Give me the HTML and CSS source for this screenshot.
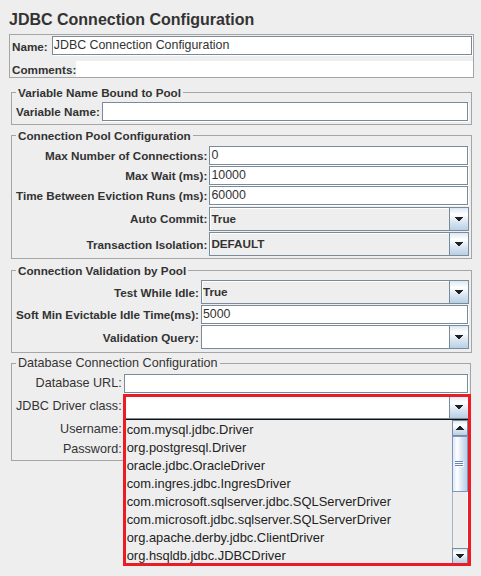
FILE: index.html
```html
<!DOCTYPE html>
<html>
<head>
<meta charset="utf-8">
<title>JDBC Connection Configuration</title>
<link rel="stylesheet" href="styles.css">
</head>
<body>
<div class="page">
  <h1 class="title">JDBC Connection Configuration</h1>

  <div class="name-panel">
    <div class="name-row">
      <span class="lbl">Name:</span>
      <div class="tf">JDBC Connection Configuration</div>
    </div>
    <div class="comments-row">
      <span class="lbl">Comments:</span>
      <div class="comments"></div>
    </div>
  </div>

  <fieldset class="group g1">
    <legend>Variable Name Bound to Pool</legend>
    <div class="form">
      <span class="lbl">Variable Name:</span>
      <div class="tf"></div>
    </div>
  </fieldset>

  <fieldset class="group g2">
    <legend>Connection Pool Configuration</legend>
    <div class="form">
      <span class="lbl">Max Number of Connections:</span>
      <div class="tf">0</div>
      <span class="lbl">Max Wait (ms):</span>
      <div class="tf">10000</div>
      <span class="lbl">Time Between Eviction Runs (ms):</span>
      <div class="tf">60000</div>
      <span class="lbl">Auto Commit:</span>
      <div class="combo mt1">
        <span class="cv">True</span>
        <span class="cbtn"><svg width="8" height="4" viewBox="0 0 8 4"><path d="M0 0h8v1H0zM1 1h6v1H1zM2 2h4v1H2zM3 3h2v1H3z" fill="#222"/></svg></span>
      </div>
      <span class="lbl">Transaction Isolation:</span>
      <div class="combo">
        <span class="cv">DEFAULT</span>
        <span class="cbtn"><svg width="8" height="4" viewBox="0 0 8 4"><path d="M0 0h8v1H0zM1 1h6v1H1zM2 2h4v1H2zM3 3h2v1H3z" fill="#222"/></svg></span>
      </div>
    </div>
  </fieldset>

  <fieldset class="group g3">
    <legend>Connection Validation by Pool</legend>
    <div class="form">
      <span class="lbl">Test While Idle:</span>
      <div class="combo">
        <span class="cv">True</span>
        <span class="cbtn"><svg width="8" height="4" viewBox="0 0 8 4"><path d="M0 0h8v1H0zM1 1h6v1H1zM2 2h4v1H2zM3 3h2v1H3z" fill="#222"/></svg></span>
      </div>
      <span class="lbl">Soft Min Evictable Idle Time(ms):</span>
      <div class="tf">5000</div>
      <span class="lbl">Validation Query:</span>
      <div class="combo edit">
        <span class="cv"></span>
        <span class="cbtn"><svg width="8" height="4" viewBox="0 0 8 4"><path d="M0 0h8v1H0zM1 1h6v1H1zM2 2h4v1H2zM3 3h2v1H3z" fill="#222"/></svg></span>
      </div>
    </div>
  </fieldset>

  <fieldset class="group g4">
    <legend>Database Connection Configuration</legend>
    <div class="form">
      <span class="lbl">Database URL:</span>
      <div class="tf"></div>
      <span class="lbl">JDBC Driver class:</span>
      <div class="combo edit mt1 jdbc">
        <span class="cv"></span>
        <span class="cbtn"><svg width="8" height="4" viewBox="0 0 8 4"><path d="M0 0h8v1H0zM1 1h6v1H1zM2 2h4v1H2zM3 3h2v1H3z" fill="#222"/></svg></span>
        <div class="popup">
          <ul class="items">
            <li>com.mysql.jdbc.Driver</li>
            <li>org.postgresql.Driver</li>
            <li>oracle.jdbc.OracleDriver</li>
            <li>com.ingres.jdbc.IngresDriver</li>
            <li>com.microsoft.sqlserver.jdbc.SQLServerDriver</li>
            <li>com.microsoft.jdbc.sqlserver.SQLServerDriver</li>
            <li>org.apache.derby.jdbc.ClientDriver</li>
            <li>org.hsqldb.jdbc.JDBCDriver</li>
          </ul>
          <div class="sbar">
            <div class="sb-btn"><svg width="8" height="4" viewBox="0 0 8 4"><path d="M3 0h2v1H3zM2 1h4v1H2zM1 2h6v1H1zM0 3h8v1H0z" fill="#222"/></svg></div>
            <div class="sb-thumb"><svg width="9" height="6" viewBox="0 0 9 6"><path d="M0 0h8v1H0zM0 2h8v1H0zM0 4h8v1H0z" fill="#6382bf"/><path d="M1 1h8v1H1zM1 3h8v1H1zM1 5h8v1H1z" fill="#ffffff"/></svg></div>
            <div class="sb-track"></div>
            <div class="sb-btn"><svg width="8" height="4" viewBox="0 0 8 4"><path d="M0 0h8v1H0zM1 1h6v1H1zM2 2h4v1H2zM3 3h2v1H3z" fill="#222"/></svg></div>
          </div>
        </div>
        <div class="redframe"></div>
      </div>
      <span class="lbl">Username:</span>
      <div class="tf"></div>
      <span class="lbl">Password:</span>
      <div class="tf"></div>
    </div>
  </fieldset>
</div>
</body>
</html>
```

FILE: styles.css
```css
* { box-sizing: border-box; }
html, body { margin: 0; padding: 0; }
body {
  background: #eeeeee;
  font-family: "Liberation Sans", Arial, sans-serif;
  color: #333333;
  width: 481px;
  height: 576px;
  overflow: hidden;
}
.title {
  margin: 0;
  padding: 11px 0 0 9px;
  font-size: 16px;
  font-weight: bold;
  line-height: 18px;
}
.lbl {
  font-size: 11.7px;
  font-weight: bold;
  white-space: nowrap;
  line-height: 15px;
}

/* text field (Metal flush 3D border) */
.tf {
  height: 19px;
  margin-right: 1px;
  border: 1px solid #7a8a99;
  background: #ffffff;
  box-shadow: 1px 1px 0 #ffffff;
  padding: 0 1px;
  font-size: 12.4px;
  line-height: 17px;
  white-space: nowrap;
  overflow: hidden;
}

/* name panel */
.name-panel {
  margin: 5px 7px 0 9px;
  border: 1px solid #a5a5a5;
  padding: 1px 0 0 2px;
}
.name-row {
  display: flex;
  align-items: center;
  gap: 4px;
}
.name-row .tf { flex: 1; margin-bottom: 1px; }
.comments-row {
  display: flex;
  align-items: center;
  margin-top: 5px;
  height: 16px;
}
.comments-row .lbl { padding-top: 1px; }
.comments { flex: 1; align-self: stretch; background: #ffffff; }

/* titled groups */
.group {
  margin: 0 9px 0 11px;
  padding: 2px 2px 3px 4px;
  border: 1px solid #a5a5a5;
  min-width: 0;
}
.group legend {
  padding: 0 2px;
  font-size: 11.7px;
  font-weight: bold;
  line-height: 15px;
}
.g1 { margin-top: 7px; padding-top: 2px; padding-bottom: 3px; }
.g2 { margin-top: 3px; padding-top: 3px; padding-bottom: 2px; }
.g3 { margin-top: 4px; padding-top: 2px; padding-bottom: 3px; }
.g4 { margin-top: 3px; margin-right: 10px; padding-top: 3px; padding-bottom: 1px; padding-right: 1px; }
.g4 legend { font-weight: normal; font-size: 12.6px; }
.g4 .lbl { font-weight: normal; font-size: 12.6px; }

.form {
  display: grid;
  grid-template-columns: auto 1fr;
  column-gap: 2px;
  row-gap: 1px;
  align-items: center;
}
.form .lbl { text-align: right; }
.g1 .form .lbl { text-align: left; }

/* combo boxes */
.combo {
  display: flex;
  height: 24px;
  border: 1px solid #7a8a99;
  background: #eeeeee;
  box-shadow: inset 1px 1px 0 #ffffff;
}
.combo.mt1 { margin-top: 1px; }
.combo.edit { background: #ffffff; box-shadow: none; }
.cv {
  flex: 1;
  padding-left: 1px;
  font-size: 11.7px;
  font-weight: bold;
  line-height: 22px;
  white-space: nowrap;
}
.cbtn {
  width: 19px;
  border-left: 1px solid #7a8a99;
  background: linear-gradient(to bottom, #dde8f3 0%, #ffffff 30%, #dde8f3 60%, #b8cfe5 100%);
  display: flex;
  align-items: center;
  justify-content: center;
}
.cbtn svg, .sb-btn svg, .sb-thumb svg { display: block; shape-rendering: crispEdges; }

/* popup list of the JDBC driver combo */
.jdbc { position: relative; }
.popup {
  position: absolute;
  left: -1px;
  top: calc(100% + 1px);
  width: 344px;
  height: 145px;
  border-top: 1px solid #111111;
  border-left: 1px solid #111111;
  background: #eeeeee;
  display: flex;
  z-index: 10;
}
.items {
  flex: 1;
  margin: 0;
  padding: 1px 0 0 2px;
  list-style: none;
}
.items li {
  height: 18px;
  line-height: 18px;
  font-size: 12.9px;
  color: #222222;
  white-space: nowrap;
}
.sbar {
  width: 16px;
  display: flex;
  flex-direction: column;
}
.sb-btn {
  height: 16px;
  border: 1px solid #7a8a99;
  background: linear-gradient(to bottom, #dde8f3 0%, #ffffff 30%, #dde8f3 60%, #b8cfe5 100%);
  display: flex;
  align-items: center;
  justify-content: center;
}
.sb-thumb {
  height: 56px;
  border: 1px solid #7b96c4;
  background: linear-gradient(to right, #dde8f3 0%, #ffffff 30%, #dde8f3 60%, #b8cfe5 100%);
  display: flex;
  align-items: center;
  justify-content: center;
}
.sb-track {
  flex: 1;
  border-left: 1px solid #a8b4c0;
  border-right: 1px solid #ffffff;
  background: #eeeeee;
}
.redframe {
  position: absolute;
  left: -2px;
  top: -2px;
  width: 348px;
  height: 172px;
  border: 3px solid #ec1c24;
  z-index: 20;
  pointer-events: none;
}
```
